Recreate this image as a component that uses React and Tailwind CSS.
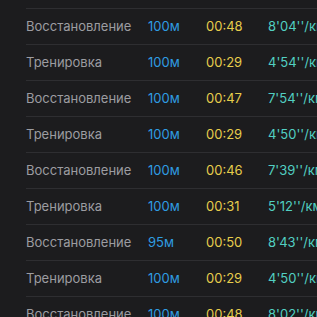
import React from 'react';

const laps = [
  { kind: 'Восстановление', dist: '100м', time: '00:48', pace: "8'04''/км" },
  { kind: 'Тренировка', dist: '100м', time: '00:29', pace: "4'54''/км" },
  { kind: 'Восстановление', dist: '100м', time: '00:47', pace: "7'54''/км" },
  { kind: 'Тренировка', dist: '100м', time: '00:29', pace: "4'50''/км" },
  { kind: 'Восстановление', dist: '100м', time: '00:46', pace: "7'39''/км" },
  { kind: 'Тренировка', dist: '100м', time: '00:31', pace: "5'12''/км" },
  { kind: 'Восстановление', dist: '95м', time: '00:50', pace: "8'43''/км" },
  { kind: 'Тренировка', dist: '100м', time: '00:29', pace: "4'50''/км" },
  { kind: 'Восстановление', dist: '100м', time: '00:48', pace: "8'02''/км" },
];

export default function App() {
  return (
    <div className="w-[317px] h-[317px] overflow-hidden bg-[#1c1c1e] pt-2 font-['Inter',sans-serif] text-[13px]">
      {laps.map((l, i) => (
        <div key={i} className="ml-[26px] h-9 border-t border-[#2e2e31] grid grid-cols-[122px_58px_62px_1fr] items-center whitespace-nowrap">
          <span className="text-[#9c9ca1]">{l.kind}</span>
          <span className="text-[#2f9de2]">{l.dist}</span>
          <span className="text-[#e6cd4c]">{l.time}</span>
          <span className="text-[#52cfc2]">{l.pace}</span>
        </div>
      ))}
    </div>
  );
}
